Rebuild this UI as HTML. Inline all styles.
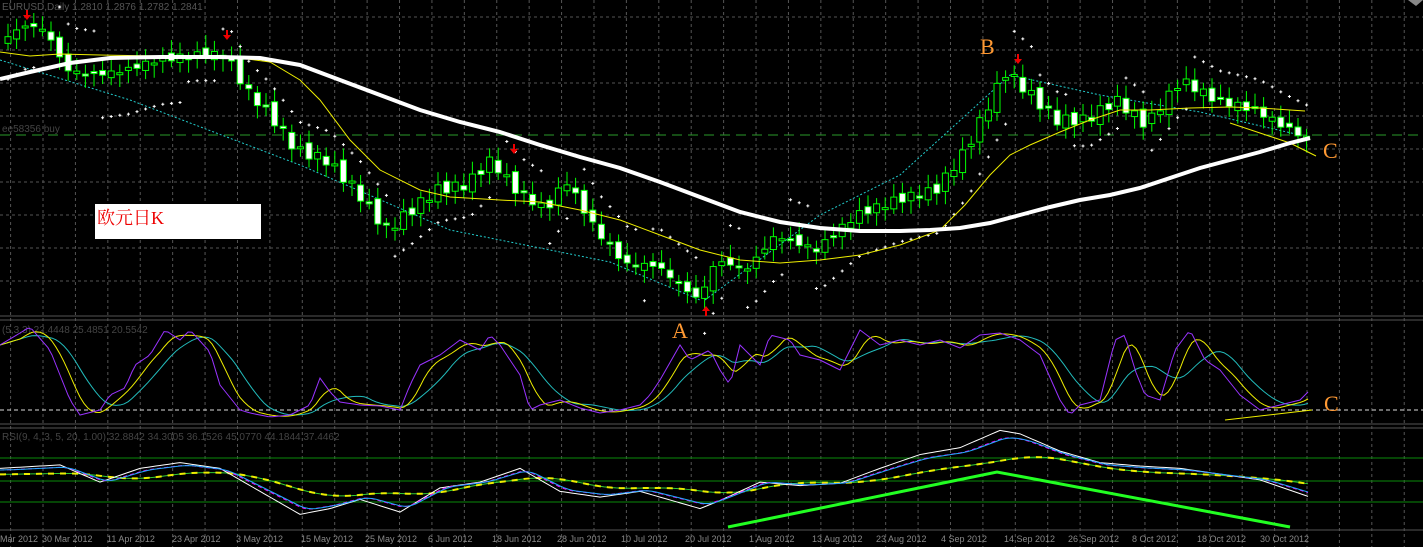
<!DOCTYPE html>
<html><head><meta charset="utf-8"><style>
html,body{margin:0;padding:0;background:#000;width:1423px;height:547px;overflow:hidden}
svg{display:block}
text{font-family:"Liberation Sans",sans-serif}
</style></head><body>
<svg id="s" width="1423" height="547" viewBox="0 0 1423 547" xmlns="http://www.w3.org/2000/svg">
<g id="grid"></g>
<line x1="0" y1="135" x2="1423" y2="135" stroke="#2a9a2a" stroke-width="1" stroke-dasharray="10,6"/>
<line x1="0" y1="316" x2="1423" y2="316" stroke="#555"/>
<line x1="0" y1="320" x2="1423" y2="320" stroke="#555"/>
<line x1="0" y1="424" x2="1423" y2="424" stroke="#555"/>
<line x1="0" y1="428" x2="1423" y2="428" stroke="#555"/>
<line x1="0" y1="530" x2="1423" y2="530" stroke="#555"/>
<line x1="0" y1="410" x2="1423" y2="410" stroke="#ddd" stroke-dasharray="4,3"/>
<line x1="0" y1="458" x2="1423" y2="458" stroke="#0a8a0a"/>
<line x1="0" y1="481" x2="1423" y2="481" stroke="#0a8a0a"/>
<line x1="0" y1="502" x2="1423" y2="502" stroke="#0a8a0a"/>
<text x="2" y="10" font-size="10" fill="#555">EURUSD,Daily  1.2810 1.2876 1.2782 1.2841</text>
<text x="2" y="132" font-size="10" fill="#444">ee58356 buy</text>
<text x="2" y="333" font-size="10" fill="#444">(5,3,3) 22.4448 25.4851 20.5542</text>
<text x="2" y="440" font-size="10" fill="#444">RSI(9, 4, 3, 5, 20, 1.00) 32.8842 34.3005 36.1526 45.0770 44.1844 37.4462</text>
<polyline fill="none" stroke="#2cc" stroke-width="1" stroke-dasharray="2,2" points="0,60 130,100 300,165 450,230 610,262 700,300"/>
<polyline fill="none" stroke="#2cc" stroke-width="1" stroke-dasharray="2,2" points="705,300 820,215 900,175 1010,75 1100,95 1200,112 1300,135"/>
<g id="cand"></g>
<g id="sar"></g>
<polyline fill="none" stroke="#ee0" stroke-width="1" points="0,52 30,56 60,54 100,55 160,56 200,56 240,58 270,62 300,80 320,100 350,140 380,170 420,190 450,197 500,200 540,202 580,210 620,220 660,235 700,250 740,260 780,263 820,260 860,255 900,245 940,230 965,205 990,175 1010,155 1030,145 1060,132 1090,120 1120,110 1150,110 1190,108 1230,107 1260,108 1290,110 1305,111"/>
<polyline fill="none" stroke="#ee0" stroke-width="1" points="1230,123 1260,133 1290,143 1316,156"/>
<polyline fill="none" stroke="#fff" stroke-width="4" points="0,79 30,72 70,63 110,58 160,57 220,57 260,58 300,65 340,80 380,95 420,110 460,122 500,132 540,145 580,157 620,168 660,182 700,197 740,212 780,222 820,228 860,231 900,231 930,230 960,228 990,223 1020,215 1050,207 1080,200 1110,195 1140,188 1170,178 1200,168 1230,160 1260,152 1290,143 1310,138"/>
<g id="arr"></g>
<rect x="95" y="204" width="166" height="35" fill="#fff"/>
<text x="97" y="224" font-size="18" fill="#e00" style="font-family:'Liberation Serif','Noto Serif CJK SC',serif">欧元日K</text>
<text x="980" y="54" font-size="22" fill="#f93" style="font-family:'Liberation Serif',serif">B</text>
<text x="672" y="338" font-size="22" fill="#f93" style="font-family:'Liberation Serif',serif">A</text>
<text x="1323" y="158" font-size="22" fill="#f93" style="font-family:'Liberation Serif',serif">C</text>
<text x="1324" y="411" font-size="22" fill="#f93" style="font-family:'Liberation Serif',serif">C</text>
<line x1="1225" y1="420" x2="1312" y2="410" stroke="#ee0"/>
<g id="osc"></g>
<polyline fill="none" stroke="#2f2" stroke-width="3" points="728,527 997,472 1290,527"/>
<g font-size="9" fill="#888">
<text x="0" y="542">Mar 2012</text><text x="42" y="542">30 Mar 2012</text><text x="107" y="542">11 Apr 2012</text><text x="172" y="542">23 Apr 2012</text><text x="236" y="542">3 May 2012</text><text x="301" y="542">15 May 2012</text><text x="365" y="542">25 May 2012</text><text x="428" y="542">6 Jun 2012</text><text x="492" y="542">18 Jun 2012</text><text x="557" y="542">28 Jun 2012</text><text x="621" y="542">10 Jul 2012</text><text x="685" y="542">20 Jul 2012</text><text x="749" y="542">1 Aug 2012</text><text x="812" y="542">13 Aug 2012</text><text x="876" y="542">23 Aug 2012</text><text x="941" y="542">4 Sep 2012</text><text x="1004" y="542">14 Sep 2012</text><text x="1068" y="542">26 Sep 2012</text><text x="1132" y="542">8 Oct 2012</text><text x="1197" y="542">18 Oct 2012</text><text x="1260" y="542">30 Oct 2012</text>
</g>
<polygon points="1408,0 1423,0 1416,6" fill="#888"/>
</svg>
<script>
(function(){
var NS="http://www.w3.org/2000/svg";
function el(p,t,a){var e=document.createElementNS(NS,t);for(var k in a)e.setAttribute(k,a[k]);document.getElementById(p).appendChild(e);return e;}
for(var i=0;i<44;i++){var gx=10.6+i*32.41;el('grid','line',{x1:gx,y1:0,x2:gx,y2:547,stroke:'#555','stroke-dasharray':'3,3'});}
[17,50,83,116,149,182,215,248,281].forEach(function(y){el('grid','line',{x1:0,y1:y,x2:1423,y2:y,stroke:'#555','stroke-dasharray':'3,3'});});
function interp(pts,x){if(x<=pts[0][0])return pts[0][1];for(var i=0;i<pts.length-1;i++){if(x>=pts[i][0]&&x<=pts[i+1][0]){var t=(x-pts[i][0])/(pts[i+1][0]-pts[i][0]);return pts[i][1]+t*(pts[i+1][1]-pts[i][1]);}}return pts[pts.length-1][1];}
var P=[[5,40],[30,25],[50,30],[70,70],[100,75],[130,70],[160,60],[200,55],[230,55],[250,90],[270,110],[300,150],[330,160],[360,190],[390,230],[410,215],[440,190],[470,185],[495,160],[520,190],[550,210],[570,180],[600,230],[630,265],[660,265],[690,290],[703,300],[720,260],[750,270],[780,235],[820,250],[860,215],[900,200],[940,190],[970,150],[1000,90],[1010,72],[1030,90],[1060,120],[1090,120],[1120,100],[1150,125],[1185,80],[1220,100],[1260,110],[1285,125],[1310,138]];
var prv=interp(P,5);
for(var cx=8;cx<=1310;cx+=8.6){
 var c=interp(P,cx+4)+Math.sin(cx*0.37)*5, o=prv+Math.sin(cx*0.91)*4;
 var tp=Math.min(o,c),h=Math.max(Math.abs(c-o),2);
 el('cand','line',{x1:cx,y1:tp-5-Math.abs(Math.sin(cx))*8,x2:cx,y2:tp+h+5+Math.abs(Math.cos(cx))*8,stroke:'#0f0'});
 el('cand','rect',{x:cx-3,y:tp,width:6,height:h,fill:(c<o?'#000':'#fff'),stroke:'#0f0','stroke-width':1});
 prv=c;
 var tr=interp(P,cx+10)-interp(P,cx-10);
 var sy=tr>0?interp(P,cx)-25-((cx*7)%20):interp(P,cx)+25+((cx*7)%20);
 el('sar','path',{d:'M'+(cx-1.5)+' '+sy+'h3M'+cx+' '+(sy-1.5)+'v3',stroke:'#fff','stroke-width':1});
}
[[27,18,1],[227,38,1],[514,152,1],[1018,62,1],[706,308,0]].forEach(function(a){
 var x=a[0],y=a[1];
 if(a[2]) el('arr','path',{d:'M'+(x-1)+' '+(y-8)+'h2v5h3l-4,5l-4,-5h3z',fill:'#e00'});
 else el('arr','path',{d:'M'+(x-1)+' '+(y+8)+'h2v-5h3l-4,-5l-4,5h3z',fill:'#e00'});
});
function pl(pts,col,w,dash){var s=pts.map(function(p){return p[0]+','+p[1];}).join(' ');var a={points:s,fill:'none',stroke:col,'stroke-width':w||1};if(dash)a['stroke-dasharray']=dash;el('osc','polyline',a);}
function dense(pts){var r=[];for(var x=0;x<=1310;x+=4)r.push([x,interp(pts,x)]);return r;}
function sm(arr,n){return arr.map(function(p,i){var s=0,c=0;for(var j=Math.max(0,i-n);j<=i;j++){s+=arr[j][1];c++;}return [p[0],s/c];});}
var K=[[0,345],[30,327],[50,350],[70,400],[80,415],[100,410],[110,395],[125,388],[135,365],[150,355],[165,330],[180,340],[190,330],[210,352],[220,385],[240,410],[250,413],[270,417],[290,415],[310,405],[320,378],[330,392],[340,402],[360,405],[380,406],[400,410],[410,385],[420,365],[440,355],[460,340],[480,350],[490,335],[500,345],[520,375],[530,410],[540,405],[560,400],[580,408],[600,413],[620,410],[640,405],[650,395],[660,380],[680,345],[690,360],[710,350],[720,370],[730,385],[740,345],[760,365],[770,335],[790,340],[800,355],[820,360],[840,370],[860,330],[880,345],[900,340],[920,345],[940,340],[960,348],[980,335],[1000,333],[1020,340],[1040,355],[1060,400],[1070,415],[1080,405],[1100,400],[1115,340],[1125,335],[1135,370],[1145,395],[1160,400],[1175,350],[1190,330],[1205,360],[1220,370],[1240,395],[1260,410],[1280,405],[1300,400],[1310,390]];
var kd=dense(K);
pl(sm(kd,12),'#2bb');pl(sm(kd,5),'#ee0');pl(kd,'#93f');
var R=[[0,470],[60,467],[100,482],[140,470],[180,465],[220,470],[260,490],[300,510],[330,505],[360,497],[400,508],[440,487],[480,482],[520,470],[560,490],[600,495],[640,490],[680,500],[700,505],[720,498],[760,482],[800,485],[840,483],[880,470],[920,458],[960,452],[1000,437],[1020,440],[1060,455],[1100,465],[1140,468],[1180,470],[1220,475],[1260,480],[1300,492],[1310,495]];
var rd=dense(R);
var slow=sm(rd,15).map(function(p){return [p[0],p[1]*0.6+481*0.4];});
pl(slow,'#3c3',1);pl(slow,'#ee0',2,'6,6');
pl(rd.map(function(p){return [p[0],p[1]+((p[1]-481)*0.15)];}),'#fff');
pl(sm(rd,3),'#f0f',1,'4,3');pl(sm(rd,4),'#2af');
})();
</script>
</body></html>
